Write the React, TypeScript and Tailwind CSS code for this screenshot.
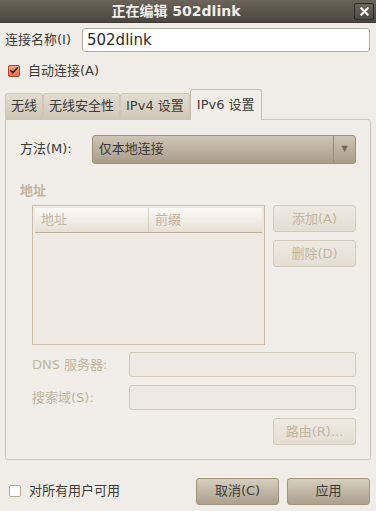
import { Check, X } from "lucide-react";

const font = { fontFamily: '"DejaVu Sans", "Noto Sans CJK SC", sans-serif' };

function Tab({ label, active }: { label: string; active?: boolean }) {
  if (active) {
    return (
      <div className="h-[31px] px-[6px] -mb-px z-10 flex items-center rounded-t-[3px] border border-b-0 border-[#c9bfae] bg-[#f1eee9] text-[#3c3b37]">
        {label}
      </div>
    );
  }
  return (
    <div className="h-[26px] px-[5px] flex items-center rounded-t-[3px] border border-b-0 border-[#cfc6b6] bg-gradient-to-b from-[#e3ddd2] to-[#cfc6b5] text-[#3c3b37]">
      {label}
    </div>
  );
}

function DisabledButton({ label }: { label: string }) {
  return (
    <div className="w-[83px] h-[27px] flex items-center justify-center rounded-[3px] border border-[#d4cabb] bg-gradient-to-b from-[#eeeae3] to-[#e4ded4] text-[#c3b59f]">
      {label}
    </div>
  );
}

function Button({ label }: { label: string }) {
  return (
    <div className="w-[83px] h-[27px] flex items-center justify-center rounded-[3px] border border-[#a0957f] bg-gradient-to-b from-[#d6cebf] to-[#ada08c] text-[#3c3b37]">
      {label}
    </div>
  );
}

export default function App() {
  return (
    <div className="w-[376px] h-[511px] bg-[#f0ede8] text-[13px] text-[#3c3b37] flex flex-col overflow-hidden" style={font}>
      <div className="h-[23px] relative flex items-center justify-center pr-[24px] bg-gradient-to-b from-[#6b645a] to-[#4a463f] border-b border-[#3c3934]">
        <span className="font-bold text-[14px] text-[#f2f0ec]">正在编辑 502dlink</span>
        <div className="absolute right-[2px] top-[3px] w-[20px] h-[17px] rounded-[2px] border border-[#2e2c28] bg-gradient-to-b from-[#6a645a] to-[#4e4a43] flex items-center justify-center">
          <X size={13} strokeWidth={4} className="text-[#f4f2ee]" />
        </div>
      </div>

      <div className="flex items-center mt-[5px] pl-[5px] pr-[6px] gap-[11px]">
        <span>连接名称(I)</span>
        <div className="flex-1 h-[24px] flex items-center px-[4px] rounded-[3px] border border-[#b8ad9b] bg-white text-[15px] text-[#2e2d2a]">
          502dlink
        </div>
      </div>

      <div className="flex items-center mt-[9px] pl-[8px] gap-[8px]">
        <div className="w-[12px] h-[12px] rounded-[2px] border border-[#b04a2a] bg-gradient-to-b from-[#f7a487] to-[#e9683f] flex items-center justify-center">
          <Check size={11} strokeWidth={4} className="text-[#3a1a10]" />
        </div>
        <span>自动连接(A)</span>
      </div>

      <div className="flex items-end mt-[8px] px-[5px]">
        <Tab label="无线" />
        <Tab label="无线安全性" />
        <Tab label="IPv4 设置" />
        <Tab label="IPv6 设置" active />
      </div>

      <div className="mx-[5px] h-[341px] rounded-b-[3px] rounded-tr-[3px] border border-[#cfc6b6] bg-[#f1eee9] flex flex-col pl-[14px] pr-[14px]">
        <div className="flex items-center mt-[15px] gap-[20px]">
          <span>方法(M):</span>
          <div className="flex-1 h-[29px] flex items-center rounded-[3px] border border-[#9d917c] bg-gradient-to-b from-[#cec5b6] to-[#a99d8a] text-[#3c3b37]">
            <span className="flex-1 pl-[6px]">仅本地连接</span>
            <div className="w-[22px] h-full flex items-center justify-center border-l border-[#998d79]">
              <span className="text-[8px] text-[#6f675b]">▼</span>
            </div>
          </div>
        </div>

        <div className="mt-[17px] font-bold text-[#c3b59f]">地址</div>

        <div className="flex mt-[5px] pl-[12px] gap-[8px]">
          <div className="w-[234px] h-[140px] border border-[#cbbfac] bg-[#eeeae3] p-[2px]">
            <div className="flex h-[25px] border-b border-[#bcaf9a] bg-gradient-to-b from-[#fbfaf8] to-[#e6e0d6] text-[#c3b59f]">
              <div className="w-[114px] pl-[6px] flex items-center border-r border-[#d8cfc0]">地址</div>
              <div className="flex-1 pl-[6px] flex items-center">前缀</div>
            </div>
          </div>
          <div className="flex flex-col gap-[8px]">
            <DisabledButton label="添加(A)" />
            <DisabledButton label="删除(D)" />
          </div>
        </div>

        <div className="flex items-center mt-[7px] pl-[12px]">
          <span className="w-[97px] text-[#c3b59f]">DNS 服务器:</span>
          <div className="flex-1 h-[25px] rounded-[3px] border border-[#d4cabb] bg-[#eeeae3]" />
        </div>
        <div className="flex items-center mt-[8px] pl-[12px]">
          <span className="w-[97px] text-[#c3b59f]">搜索域(S):</span>
          <div className="flex-1 h-[25px] rounded-[3px] border border-[#d4cabb] bg-[#eeeae3]" />
        </div>
        <div className="flex justify-end mt-[8px]">
          <DisabledButton label="路由(R)..." />
        </div>
      </div>

      <div className="flex items-center mt-[18px] pl-[9px] pr-[6px]">
        <div className="w-[12px] h-[12px] rounded-[2px] border border-[#b3a896] bg-white" />
        <span className="ml-[8px] flex-1">对所有用户可用</span>
        <div className="flex gap-[8px]">
          <Button label="取消(C)" />
          <Button label="应用" />
        </div>
      </div>
    </div>
  );
}
